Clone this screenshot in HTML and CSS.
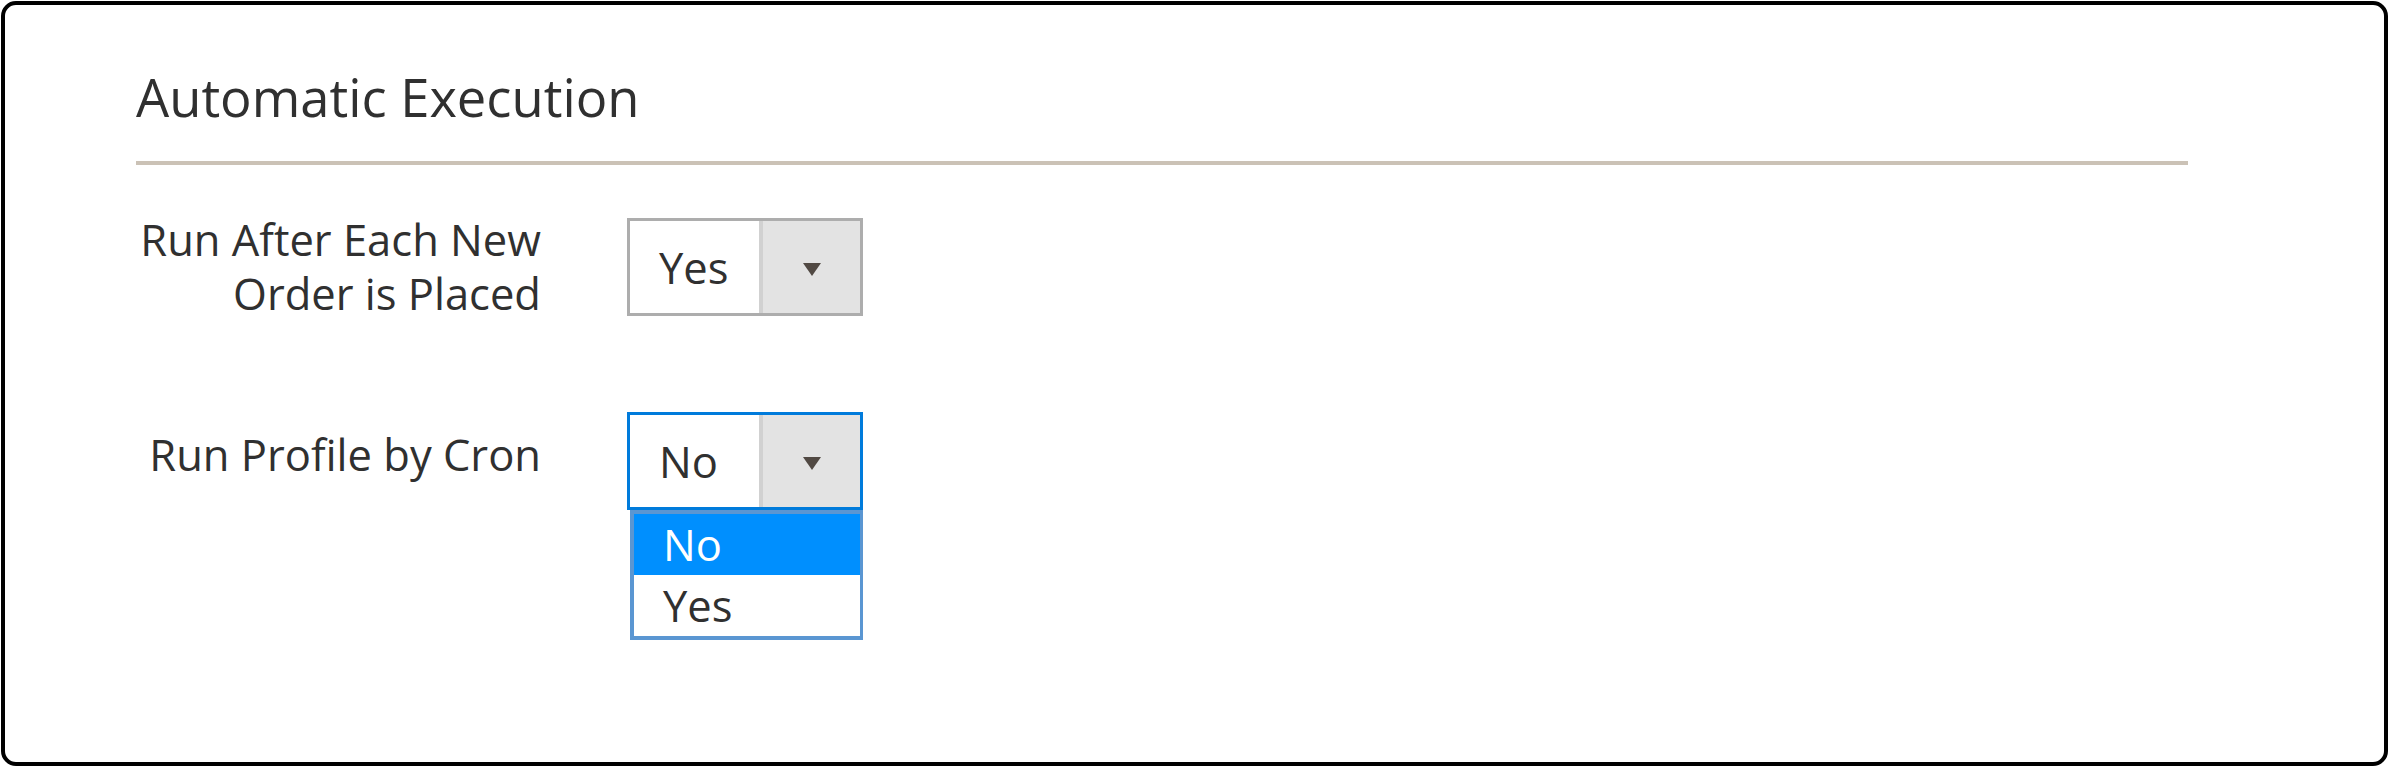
FILE: index.html
```html
<!DOCTYPE html>
<html>
<head>
<title>Automatic Execution</title>
<link rel="stylesheet" href="styles.css">
</head>
<body>
	<div class="frame">
		<div class="section">
			<h2 class="section-title">Automatic Execution</h2>

			<div class="field">
				<label class="field-label">Run After Each New Order is Placed</label>
				<div class="select-wrap">
					<div class="select">
						<span class="select-value">Yes</span>
						<span class="select-arrow">
							<svg width="18" height="13" viewBox="0 0 18 13"><polygon points="0,0 18,0 9,13" fill="#514943"/></svg>
						</span>
					</div>
				</div>
			</div>

			<div class="field field-cron">
				<label class="field-label field-label-single">Run Profile by Cron</label>
				<div class="select-wrap">
					<div class="select select-focus">
						<span class="select-value">No</span>
						<span class="select-arrow">
							<svg width="18" height="13" viewBox="0 0 18 13"><polygon points="0,0 18,0 9,13" fill="#514943"/></svg>
						</span>
					</div>
					<ul class="select-list">
						<li class="option option-active">No</li>
						<li class="option">Yes</li>
					</ul>
				</div>
			</div>
		</div>
	</div>
</body>
</html>
```

FILE: styles.css
```css
body {
	margin: 0;
	padding: 0;
	background: #fff;
	font-family: "Open Sans", "DejaVu Sans", sans-serif;
	color: #303030;
}

.frame {
	box-sizing: border-box;
	height: 765px;
	margin: 1px;
	padding: 62px 0 0 131px;
	border: 4px solid #000;
	border-radius: 15px;
}

.section {
	width: 2052px;
}

.section-title {
	margin: 0;
	padding-bottom: 34px;
	font-size: 52.5px;
	font-weight: 400;
	line-height: 60px;
	border-bottom: 4px solid #cbc2b6;
}

.field {
	display: grid;
	grid-template-columns: 405px 236px;
	column-gap: 86px;
	align-items: center;
	margin-top: 48px;
}

.field-cron {
	margin-top: 91px;
}

.field-label {
	font-size: 43.5px;
	line-height: 54px;
	text-align: right;
}

.field-label-single {
	margin-bottom: 12px;
}

.select-wrap {
	position: relative;
}

.select {
	display: flex;
	box-sizing: border-box;
	height: 98px;
	border: 3px solid #adadad;
	background: #fff;
}

.select-focus {
	border-color: #007bdb;
}

.select-value {
	flex: 1;
	display: flex;
	align-items: center;
	padding-left: 29px;
	font-size: 43.5px;
}

.select-arrow {
	display: flex;
	align-items: center;
	justify-content: center;
	width: 97px;
	border-left: 4px solid #d1d1d1;
	background: #e3e3e3;
}

.select-arrow svg {
	margin-top: 5px;
}

.select-list {
	position: absolute;
	top: 100%;
	left: 3px;
	right: 0;
	margin: 0;
	padding: 0;
	list-style: none;
	background: #fff;
	border: 4px solid #5a96d2;
	border-right-width: 3px;
}

.option {
	height: 61px;
	padding-left: 29px;
	font-size: 43.5px;
	line-height: 61px;
}

.option-active {
	background: #008ffe;
	color: #fff;
}
```
